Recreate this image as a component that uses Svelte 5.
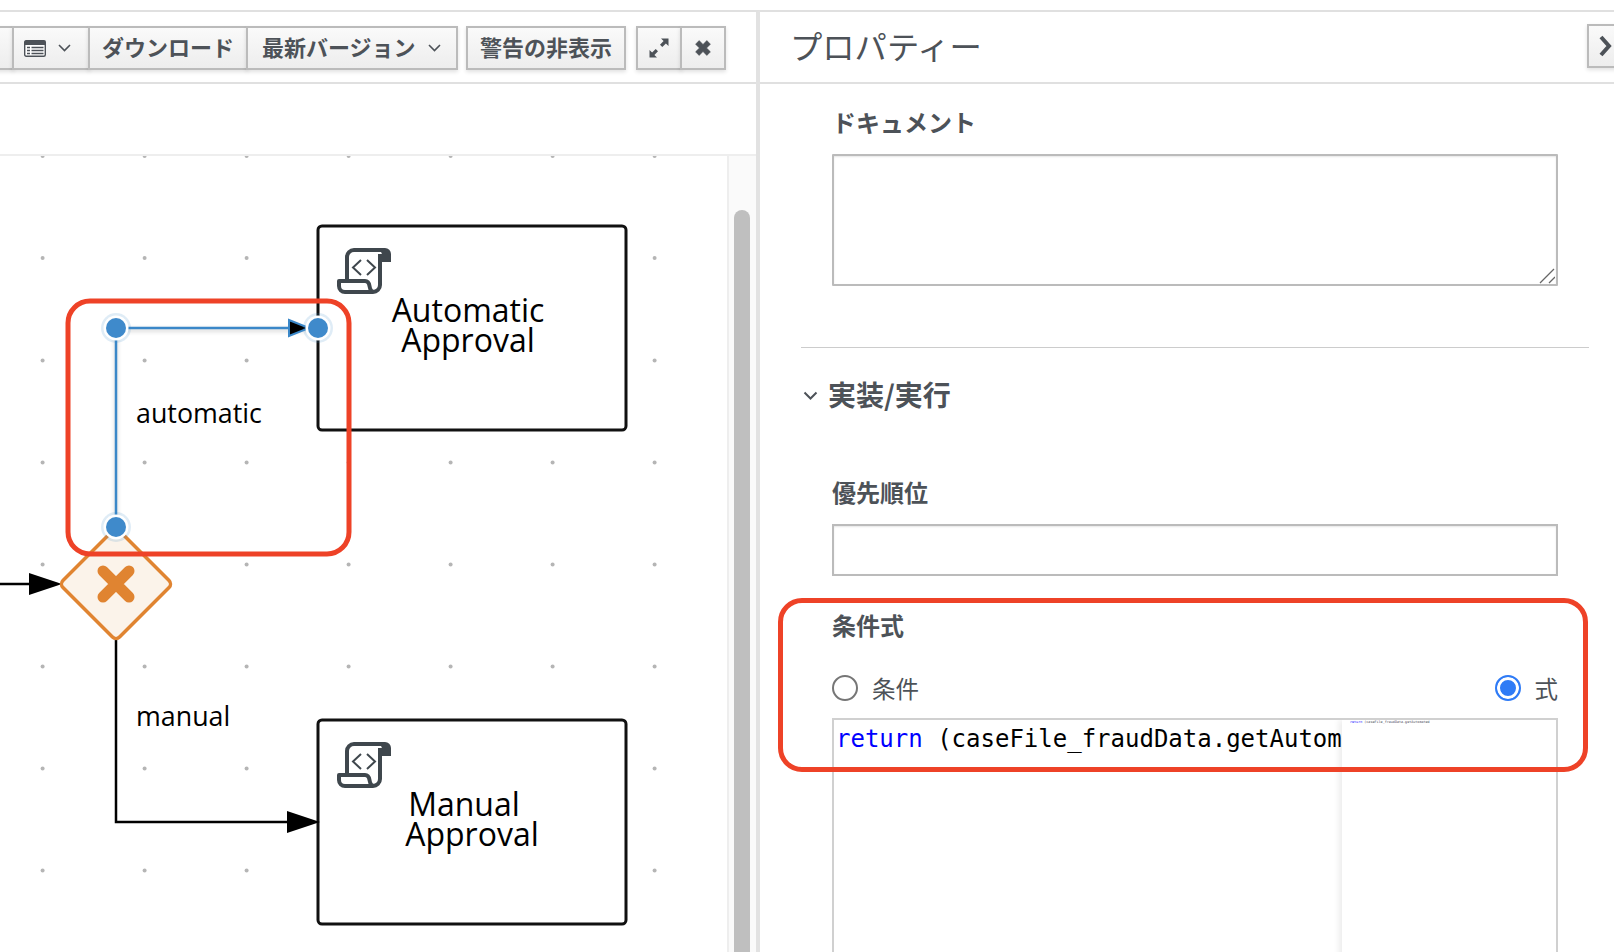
<script>
  const xs = [42.6, 144.6, 246.6, 348.6, 450.6, 552.6, 654.6];
  const ys = [156, 258, 360.6, 462.6, 564.6, 666.6, 768.6, 870.6];
  const dots = ys.flatMap((y) => xs.map((x) => ({ x, y })));
  const handles = [[116, 328], [318, 328], [116, 527]];
  const scriptIcons = [[337, 248], [337, 742]];
</script>

<div class="app">
  <section class="left">
    <header class="toolbar">
      <div class="group first">
        <button class="btn stub" aria-label="more"></button>
        <button class="btn table" aria-label="table">
          <svg width="22" height="17" viewBox="0 0 22 17">
            <rect x="0.7" y="0.7" width="20.6" height="15.6" rx="1.5" fill="#fff" stroke="#4d5258" stroke-width="1.4"/>
            <rect x="0.7" y="0.7" width="20.6" height="4.3" fill="#4d5258"/>
            <path d="M3 7.5h3M3 10.5h3M3 13.5h3M7.5 7.5h12M7.5 10.5h12M7.5 13.5h12" stroke="#4d5258" stroke-width="1.5"/>
          </svg>
          <svg class="chev" width="13" height="8" viewBox="0 0 13 8"><path d="M1 1l5.5 5.5L12 1" fill="none" stroke="#4d5258" stroke-width="1.6"/></svg>
        </button>
        <button class="btn download">ダウンロード</button>
        <button class="btn latest">最新バージョン
          <svg class="chev" width="13" height="8" viewBox="0 0 13 8"><path d="M1 1l5.5 5.5L12 1" fill="none" stroke="#4d5258" stroke-width="1.6"/></svg>
        </button>
      </div>
      <button class="btn warn">警告の非表示</button>
      <div class="group">
        <button class="btn icon" aria-label="expand">
          <svg width="20" height="20" viewBox="0 0 20 20"><path d="M12 .5h7.5V8l-2.600-2.600-3.600 3.600-2.300-2.300 3.600-3.600zM8 19.500H.5V12l2.600 2.600 3.600-3.600 2.300 2.300-3.600 3.600z" fill="#4d5258"/></svg>
        </button>
        <button class="btn icon" aria-label="close">
          <svg width="16" height="16" viewBox="2.4 2.4 11.2 11.2"><path d="M2.8 5.300L5.300 2.800 8 5.500l2.700-2.700 2.500 2.500L10.500 8l2.700 2.700-2.500 2.500L8 10.500l-2.700 2.700-2.500-2.500L5.500 8z" fill="#4d5258" stroke="#4d5258" stroke-width="0.4" stroke-linejoin="round"/></svg>
        </button>
      </div>
    </header>
    <div class="subbar"></div>
    <div class="canvas">
      <svg class="diagram" viewBox="0 156 727 796" width="727" height="796">
        {#each dots as d}
          <circle cx={d.x} cy={d.y} r="2" fill="#b5b5b5"/>
        {/each}

        <rect x="318" y="226" width="308" height="204" rx="4" fill="#fff" stroke="#111" stroke-width="3"/>
        <rect x="318" y="720" width="308" height="204" rx="4" fill="#fff" stroke="#111" stroke-width="3"/>

        {#each scriptIcons as [x, y]}
          <g transform="translate({x} {y})" fill="none" stroke="#3f474d">
            <path d="M10 34V9a7 7 0 0 1 7-7h30" stroke-width="4"/>
            <path d="M40 0h8a6 6 0 0 1 6 6v8H45V7a5 5 0 0 0-5-5z" fill="#3f474d" stroke="none"/>
            <path d="M43 6v31a7 7 0 0 1-7 7H8a6 6 0 0 1-6-6v-5h26c3 0 4 2 4.500 5s2 6 4.500 6" stroke-width="4" stroke-linejoin="round"/>
            <path d="M24 12l-8 7.500 8 7.500M30 12l8 7.500-8 7.500" stroke-width="2"/>
          </g>
        {/each}

        <path d="M0 584h36" stroke="#000" stroke-width="2.5" fill="none"/>
        <path d="M29 573l33 11-33 11z" fill="#000"/>
        <path d="M116 640v182h176" stroke="#000" stroke-width="2.5" fill="none"/>
        <path d="M287 811l33 11-33 11z" fill="#000"/>

        <rect x="76" y="544" width="80" height="80" rx="5" transform="rotate(45 116 584)" fill="#fbf3ea" stroke="#e08431" stroke-width="3.500"/>
        <path d="M103 571l26 26M129 571l-26 26" stroke="#e08431" stroke-width="11" stroke-linecap="round" fill="none"/>

        <path class="selected" d="M116 527V328h198" stroke="#3a87c8" stroke-width="2.500" fill="none"/>
        <path d="M289 320l20 8-20 8z" fill="#000" stroke="#3a87c8" stroke-width="2"/>
        {#each handles as [x, y]}
          <circle cx={x} cy={y} r="15" fill="#3a87c8" opacity="0.16"/>
          <circle cx={x} cy={y} r="12.500" fill="#fff"/>
          <circle cx={x} cy={y} r="10" fill="#3f8acb"/>
        {/each}

        <g class="label">
          <text x="136" y="423">automatic</text>
          <text x="136" y="726">manual</text>
        </g>
        <g class="task">
          <text x="468" y="322" text-anchor="middle">Automatic</text>
          <text x="468" y="352" text-anchor="middle">Approval</text>
          <text x="464" y="816" text-anchor="middle">Manual</text>
          <text x="472" y="846" text-anchor="middle">Approval</text>
        </g>

        <rect x="68" y="301" width="281" height="253" rx="22" fill="none" stroke="#ee4227" stroke-width="5"/>
      </svg>
      <div class="scrollbar"><div class="thumb"></div></div>
    </div>
  </section>

  <section class="right">
    <header class="panel-head">
      <h2>プロパティー</h2>
      <button class="btn collapse" aria-label="collapse">
        <svg width="16" height="22" viewBox="0 0 16 22"><path d="M4 2l8 9-8 9" fill="none" stroke="#4d5258" stroke-width="4"/></svg>
      </button>
    </header>
    <div class="form">
      <label class="field-label" for="doc">ドキュメント</label>
      <div class="doc-wrap">
        <textarea id="doc" class="doc"></textarea>
        <svg class="grip" width="16" height="16" viewBox="0 0 16 16"><path d="M1 15L15 1M10 15l6-6" stroke="#666" stroke-width="1.300" fill="none"/></svg>
      </div>
      <hr class="rule"/>
      <h3 class="section-title">
        <svg class="twist" width="15" height="10" viewBox="0 0 15 10"><path d="M1.500 1.500l6 6 6-6" fill="none" stroke="#4d5258" stroke-width="2"/></svg>
        実装/実行
      </h3>
      <label class="field-label priority" for="prio">優先順位</label>
      <input id="prio" class="prio"/>
      <div class="cond">
        <div class="field-label">条件式</div>
        <div class="radios">
          <span class="radio-item"><span class="radio"></span>条件</span>
          <span class="radio-item"><span class="radio on"></span>式</span>
        </div>
        <div class="editor">
          <div class="code"><span class="kw">return</span> (caseFile_fraudData.getAutom</div>
          <div class="minimap"><span class="mini"><span class="kw">return</span> (caseFile_fraudData.getAutomated</span></div>
        </div>
        <div class="callout"></div>
      </div>
    </div>
  </section>
</div>

<style>
  :global(body) { margin: 0; background: #fff; overflow: hidden; }
  .app {
    display: flex;
    box-sizing: border-box;
    width: 1614px;
    height: 952px;
    padding-top: 10px;
    overflow: hidden;
    font-family: "Noto Sans CJK JP", "Noto Sans", sans-serif;
    color: #4d5258;
  }
  .left {
    display: flex;
    flex-direction: column;
    width: 756px;
    flex: none;
    border-top: 2px solid #e0e0e0;
    border-right: 4px solid #e2e2e2;
    overflow: hidden;
  }
  .toolbar {
    display: flex;
    align-items: flex-start;
    flex: none;
    height: 56px;
    padding-top: 14px;
    border-bottom: 2px solid #e0e0e0;
  }
  .group { display: flex; }
  .group.first { margin-left: -11px; }
  .btn {
    box-sizing: border-box;
    display: inline-flex;
    align-items: center;
    justify-content: center;
    height: 44px;
    padding: 0 0 5px;
    margin: 0;
    border: 2px solid #bbb;
    background: linear-gradient(#fafafa, #ededed);
    box-shadow: 0 2px 4px rgba(0, 0, 0, 0.12);
    color: #4d5258;
    font-family: inherit;
    font-size: 22px;
    font-weight: 700;
    white-space: nowrap;
  }
  .group .btn + .btn { margin-left: -2px; }
  .stub { width: 25px; }
  .table { width: 78px; gap: 12px; justify-content: flex-start; padding: 0 0 0 10px; }
  .download { width: 160px; }
  .latest { width: 212px; gap: 12px; justify-content: flex-start; padding-left: 14px; }
  .latest .chev { margin-top: 5px; }
  .warn { width: 160px; margin-left: 8px; }
  .group:last-child { margin-left: 10px; }
  .icon { width: 46px; padding: 0; }
  .subbar {
    flex: none;
    height: 70px;
    border-bottom: 2px solid #eee;
  }
  .canvas {
    position: relative;
    display: flex;
    flex: 1;
    min-height: 0;
  }
  .diagram { display: block; flex: none; }
  .diagram .selected { filter: drop-shadow(0 2px 2px rgba(0, 0, 0, 0.2)); }
  .diagram .label text { font: 26.800px "Open Sans", sans-serif; fill: #000; }
  .diagram .task text { font: 32px "Open Sans", sans-serif; fill: #000; }
  .scrollbar {
    flex: 1;
    box-sizing: border-box;
    border-left: 2px solid #eee;
    padding: 54px 6px 0 5px;
    background: #fafafa;
  }
  .thumb {
    height: 100%;
    background: #bfbfbf;
    border-radius: 8px 8px 0 0;
  }
  .right {
    flex: 1;
    min-width: 0;
    display: flex;
    flex-direction: column;
    border-top: 2px solid #e0e0e0;
  }
  .panel-head {
    display: flex;
    justify-content: space-between;
    align-items: flex-start;
    flex: none;
    height: 70px;
    border-bottom: 2px solid #e0e0e0;
  }
  h2 {
    margin: 0 0 0 30px;
    font-size: 32.300px;
    font-weight: 400;
    line-height: 66px;
    color: #4d5258;
  }
  .collapse { width: 44px; margin: 12px -17px 0 0; justify-content: flex-start; padding: 0 0 0 8px; }
  .form {
    padding: 23px 56px 0 72px;
  }
  .field-label {
    display: block;
    font-size: 24px;
    font-weight: 700;
    line-height: 30px;
    color: #4d5258;
  }
  .doc-wrap { position: relative; margin-top: 17px; height: 132px; }
  .doc {
    display: block;
    box-sizing: border-box;
    width: 100%;
    height: 132px;
    margin: 0;
    border: 2px solid #bbb;
    border-radius: 1px;
    box-shadow: inset 0 1px 2px rgba(0, 0, 0, 0.1);
    outline: none;
    resize: none;
  }
  .grip { position: absolute; right: 3px; bottom: 2px; }
  .rule {
    width: 788px;
    height: 1px;
    margin: 61px 0 0 -31px;
    border: 0;
    background: #ccc;
  }
  .section-title {
    display: flex;
    align-items: center;
    gap: 10px;
    margin: 28px 0 0 -29px;
    font-size: 28px;
    font-weight: 700;
    line-height: 36px;
    color: #4d5258;
  }
  .twist { margin-top: 3px; }
  .priority { margin-top: 65px; }
  .prio {
    display: block;
    box-sizing: border-box;
    width: 100%;
    height: 52px;
    margin-top: 17px;
    border: 2px solid #bbb;
    box-shadow: inset 0 1px 2px rgba(0, 0, 0, 0.1);
    outline: none;
  }
  .cond { position: relative; margin-top: 34px; }
  .radios {
    display: flex;
    justify-content: space-between;
    margin-top: 32px;
    height: 32px;
  }
  .radio-item {
    display: flex;
    align-items: center;
    gap: 14px;
    font-size: 23.500px;
    line-height: 32px;
    color: #4d5258;
  }
  .radio {
    box-sizing: border-box;
    display: block;
    width: 26px;
    height: 26px;
    border: 2px solid #767676;
    border-radius: 50%;
    background: #fff;
  }
  .radio.on {
    border-color: #2f7bf6;
    background: #2f7bf6;
    box-shadow: inset 0 0 0 3px #fff;
  }
  .editor {
    position: relative;
    box-sizing: border-box;
    width: 100%;
    height: 300px;
    margin-top: 14px;
    border: 2px solid #d0d0d0;
    overflow: hidden;
  }
  .code {
    padding: 3px 0 0 2px;
    font: 24px/32px "DejaVu Sans Mono", monospace;
    color: #000;
    white-space: pre;
  }
  .kw { color: #0000ff; }
  .minimap {
    position: absolute;
    top: 0;
    bottom: 0;
    right: 0;
    width: 214px;
    background: #fff;
    box-shadow: -3px 0 6px rgba(0, 0, 0, 0.08);
  }
  .mini {
    display: block;
    padding: 0 0 0 8px;
    font: 3.400px/5px "DejaVu Sans Mono", monospace;
    color: #445;
    white-space: pre;
  }
  .callout {
    position: absolute;
    left: -54px;
    top: -12px;
    box-sizing: border-box;
    width: 810px;
    height: 174px;
    border: 5px solid #ee4227;
    border-radius: 24px;
    pointer-events: none;
  }
</style>
